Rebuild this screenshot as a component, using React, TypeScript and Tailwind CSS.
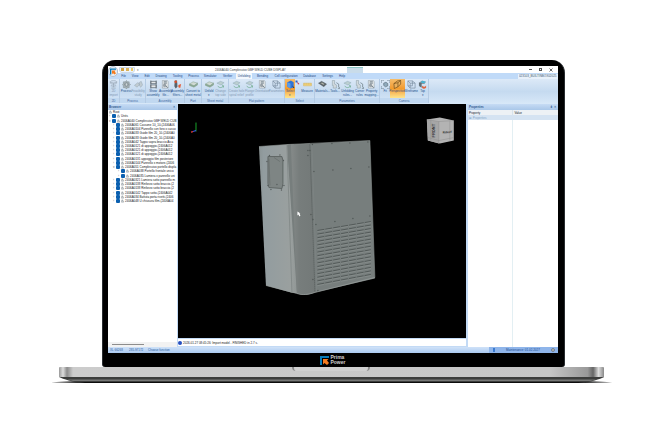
import React from "react";

type Kind = "sheet" | "gear" | "parts" | "stack" | "doc" | "filter" | "flat" | "flip" | "cube" | "ruler" | "dark" | "tool" | "fit" | "wire" | "top" | "persp";

const shapes: Record<Kind, React.ReactNode> = {
  sheet: (
    <g fill="none" stroke="#98a6b5" strokeWidth="1.6">
      <ellipse cx="10" cy="4" rx="7" ry="2.5" />
      <path d="M3 4v3c2 3 12 3 14 0V4M10 7v8M7 12l3 4 3-4M4 13h3M13 13h3M5 18h10" />
    </g>
  ),
  gear: (
    <g fill="#a6b0b4" stroke="#7c8a92">
      <path d="M10 1l2 3 4 0 0 4 3 2-3 3v4h-4l-2 3-3-3H3v-4l-2-3 2-2V4h4z" />
      <circle cx="10" cy="10" r="4" fill="#6f7c85" />
      <path d="M7 8l5-2 1 6-5 2z" fill="#d1d7da" />
    </g>
  ),
  parts: (
    <g fill="#c1ccd2" stroke="#91a4b0">
      <path d="M1 12l7-6 5 3-6 7zM11 6l5-3 3 8-4 5-3-3z" />
    </g>
  ),
  stack: (
    <g fill="#e4e7e9" stroke="#555f68" strokeWidth="1.5">
      <path d="M4 1v18M16 1v18M4 3h12v5H4zM4 11h12v6H4z" />
    </g>
  ),
  doc: (
    <g stroke="#7e8890">
      <path d="M3 1h11l2 3v14H3z" fill="#e7eaec" />
      <path d="M6 4h7M6 7h7M7 10l8 7" strokeWidth="2" stroke="#6b7a85" />
      <circle cx="8" cy="12" r="3" fill="#9aa3a9" />
    </g>
  ),
  filter: (
    <g>
      <path d="M4 1h5l1 14-4 4-3-5z" fill="#57626b" />
      <circle cx="6" cy="4" r="3" fill="#d6502c" />
      <path d="M12 11l6-2-2 9-4-2z" fill="#e55b35" />
    </g>
  ),
  flat: (
    <g stroke="#7d9b86">
      <path d="M1 9l8-5 10 3-8 6z" fill="#d0dad3" />
      <path d="M1 9v3l10 4 8-5V7l-8 6z" fill="#8fac97" />
    </g>
  ),
  flip: (
    <g stroke="#8ba8b3">
      <path d="M2 7l8-4 8 3-7 5z" fill="#bccfd1" />
      <path d="M4 13c2 5 10 5 12 0M13 11l4 2-1 4" fill="none" strokeWidth="2" stroke="#79b19a" />
    </g>
  ),
  cube: (
    <g>
      <path d="M3 5l8-4 6 4v11l-7 3-7-4z" fill="#2e74d7" />
      <path d="M3 5l7 3v11l-7-4z" fill="#5b9cea" />
      <path d="M14 12l5 5-3 1z" fill="#263755" />
    </g>
  ),
  ruler: <path d="M1 7h18v6H1zM4 7v3M8 7v3M12 7v3M16 7v3" fill="#efcf76" stroke="#d2b460" />,
  dark: (
    <g stroke="#5e666b">
      <path d="M1 7l7-4 11 6-6 6z" fill="#545d62" />
      <path d="M5 7l4-2 6 4-3 2z" fill="#b5b8ae" />
    </g>
  ),
  tool: (
    <g stroke="#7e8f99" fill="#d1d9dd">
      <path d="M3 1h5v8l4 2v7H5v-6H3z" />
      <path d="M12 6l5 3v7l3 2-5 2" fill="none" strokeWidth="2" />
    </g>
  ),
  fit: (
    <g fill="none" stroke="#5f7280" strokeWidth="1.5">
      <path d="M1 6V1h5M14 1h5v5M19 14v5h-5M6 19H1v-5" strokeDasharray="3 1" />
      <path d="M6 7l5-2 4 3v5l-5 2-4-3z" fill="#8faabc" />
    </g>
  ),
  wire: (
    <g fill="none" stroke="#73869a" strokeWidth="1.4">
      <path d="M2 2h10v11H2zM7 7h11v11H7zM2 2l5 5M12 2l6 5M2 13l5 5" />
    </g>
  ),
  top: (
    <g>
      <path d="M2 6l7-5 9 3-4 5H7v6l-5-2z" fill="#8a979e" />
      <path d="M2 6h6v11l-5-3z" fill="#5e6d76" />
      <path d="M9 2l8 2-3 3-8-2z" fill="#3bb8de" />
      <path d="M9 13c3 3 7 2 9-1v5c-3 3-7 3-9 0z" fill="#dc6642" />
    </g>
  ),
  persp: (
    <g fill="#ebb15e" stroke="#6e4c1b" strokeWidth="1.5">
      <path d="M2 8l9-2v9l-8 4zM11 6l6-5v8l-6 6M2 8l8-6 7-1" />
    </g>
  ),
};

function Icon({ kind }: { kind: Kind }) {
  return (
    <svg viewBox="0 0 20 20" className="h-[9px] w-[9px] shrink-0" aria-hidden="true">
      {shapes[kind]}
    </svg>
  );
}

type Tool = { kind: Kind; lines: string[]; width: string; state?: "on" | "off" };
type Group = { title: string; width: string; tools: Tool[] };

const groups: Group[] = [
  { title: "2D", width: "w-[12px]", tools: [{ kind: "sheet", lines: ["2D", "import"], width: "w-[12px]", state: "off" }] },
  {
    title: "Process",
    width: "w-[26px]",
    tools: [
      { kind: "gear", lines: ["Process"], width: "w-[11px]" },
      { kind: "parts", lines: ["Feasibility", "study"], width: "w-[13px]", state: "off" },
    ],
  },
  {
    title: "Assembly",
    width: "w-[39px]",
    tools: [
      { kind: "stack", lines: ["Show", "assembly"], width: "w-[13px]" },
      { kind: "doc", lines: ["Assembly", "file..."], width: "w-[12px]" },
      { kind: "filter", lines: ["Assembly", "filters..."], width: "w-[12px]" },
    ],
  },
  { title: "Part", width: "w-[17px]", tools: [{ kind: "flat", lines: ["Convert to", "sheet metal"], width: "w-[16px]" }] },
  {
    title: "Sheet metal",
    width: "w-[27px]",
    tools: [
      { kind: "flat", lines: ["Unfold", "▾"], width: "w-[11px]" },
      { kind: "flip", lines: ["Change", "top side"], width: "w-[12px]", state: "off" },
    ],
  },
  {
    title: "Flat pattern",
    width: "w-[56px]",
    tools: [
      { kind: "flip", lines: ["Create hole", "spiral relief"], width: "w-[15px]", state: "off" },
      { kind: "flip", lines: ["Flange", "profile"], width: "w-[11px]", state: "off" },
      { kind: "doc", lines: ["Orientation"], width: "w-[14px]", state: "off" },
      { kind: "wire", lines: ["Parameters"], width: "w-[15px]", state: "off" },
    ],
  },
  {
    title: "Select",
    width: "w-[30px]",
    tools: [
      { kind: "cube", lines: ["Select", "▾"], width: "w-[10px]", state: "on" },
      { kind: "ruler", lines: ["Measure"], width: "w-[14px]" },
    ],
  },
  {
    title: "Parameters",
    width: "w-[65px]",
    tools: [
      { kind: "dark", lines: ["Materials..."], width: "w-[13px]" },
      { kind: "tool", lines: ["Tools..."], width: "w-[12px]" },
      { kind: "flip", lines: ["Unfolding", "rules..."], width: "w-[13px]" },
      { kind: "tool", lines: ["Corner", "rules"], width: "w-[11px]" },
      { kind: "doc", lines: ["Property", "mapping..."], width: "w-[13px]" },
    ],
  },
  {
    title: "Camera",
    width: "w-[49px]",
    tools: [
      { kind: "fit", lines: ["Fit"], width: "w-[9px]" },
      { kind: "persp", lines: ["Perspective"], width: "w-[15px]", state: "on" },
      { kind: "wire", lines: ["Wireframe"], width: "w-[13px]" },
      { kind: "top", lines: ["Top", "▾"], width: "w-[10px]" },
    ],
  },
];

const tabs: [string, string][] = [
  ["File", "w-[11px]"],
  ["View", "w-[12px]"],
  ["Edit", "w-[12px]"],
  ["Drawing", "w-[16px]"],
  ["Tooling", "w-[17px]"],
  ["Process", "w-[15px]"],
  ["Simulator", "w-[18px]"],
  ["Verifier", "w-[17px]"],
  ["Unfolding", "w-[16px]"],
  ["Bending", "w-[21px]"],
  ["Cell configuration", "w-[26px]"],
  ["Database", "w-[21px]"],
  ["Settings", "w-[15px]"],
  ["Help", "w-[14px]"],
];

type Row = { text: string; pad: string; arrow?: string; box?: boolean };

const child = (text: string): Row => ({ text, pad: "pl-[5px]", arrow: "›", box: true });

const rows: Row[] = [
  { text: "Root", pad: "pl-px" },
  { text: "Units", pad: "pl-px", arrow: "›", box: true },
  { text: "2406A040 Complessivo GBF WELD CUB", pad: "pl-px", arrow: "▾", box: true },
  child("2406A061 Cassone 10_10-(2406A06"),
  child("2406A0104 Pannello con foro x casso"),
  child("2406A033 Guide film 20_10-(2406A0"),
  child("2406A033 Guide film 20_10-(2406A0"),
  child("2406A042 Tappo sopra braccio Aica"),
  child("2406A0121 di appoggio-(2406A012"),
  child("2406A0121 di appoggio-(2406A012"),
  child("2406A0121 di appoggio-(2406A012"),
  child("2406A0131 appoggio film posteriore"),
  child("2406A0144 Pannello x motore-(2406"),
  { text: "2406A051 Complessivo portello displa", pad: "pl-[5px]", arrow: "▾", box: true },
  { text: "2406A038 Portello frontale unico", pad: "pl-[10px]", arrow: "›", box: true },
  { text: "2406A035 Lamiera x pannello uni", pad: "pl-[10px]", arrow: "›", box: true },
  child("2406A0321 Lamiera sotto pannello m"),
  child("2406A0138 Rinforzo sotto braccio-(2"),
  child("2406A0138 Rinforzo sotto braccio-(2"),
  child("2406A0142 Tappo sotto-(2406A042"),
  child("2406A034 Battuta porta rivetti-(2406"),
  child("2406A048 U chiusura film-(2406A04"),
];

function TreeRow({ row }: { row: Row }) {
  return (
    <li className={`flex min-h-0 flex-1 items-center gap-px ${row.pad}`}>
      {row.arrow && <span className="w-[2px] text-[#66717d]">{row.arrow}</span>}
      {row.box && (
        <input
          type="checkbox"
          defaultChecked
          aria-label={row.text}
          className="h-[4px] w-[4px] shrink-0 appearance-none rounded-[1px] bg-[#0b60b0]"
        />
      )}
      <svg viewBox="0 0 8 8" className="h-[4px] w-[3px] shrink-0" aria-hidden="true">
        <path d="M2 1h3v3l2 1v2H1V5l1-1z" fill="#d4d9dc" stroke="#69747c" />
      </svg>
      <span className="whitespace-nowrap">{row.text}</span>
    </li>
  );
}

function TitleBar() {
  return (
    <header className="flex h-[7px] shrink-0 items-center bg-white pl-[11px] pr-[5px]">
      <div className="flex h-[6px] w-[16px] items-center justify-around rounded-b-[3px] border border-[#cbd9e9] bg-[#eef4fb]">
        <i className="h-[3px] w-[3px] bg-[#d2a245]" />
        <i className="h-[3px] w-[3px] bg-[#d9b15b]" />
        <i className="h-[3px] w-[2px] bg-[#eac969]" />
      </div>
      <span className="ml-[2px] text-[#5b6673]">▾</span>
      <h1 className="ml-[76px] w-[132px] whitespace-nowrap text-[#3a3f45]">2406A040 Complessivo GBF WELD CUBE DISPLAY</h1>
      <i className="mt-px h-[6px] w-[16px] border-t border-[#8cc5c4] bg-[#c9dcea]" />
      <div className="ml-auto flex items-center gap-[7px]">
        <button aria-label="Minimize" className="h-px w-[3px] bg-[#555]" />
        <button aria-label="Restore" className="h-[3px] w-[3px] border border-[#555]" />
        <button aria-label="Close" className="flex w-[4px]">
          <svg viewBox="0 0 8 8" className="h-[4px] w-[4px]">
            <path d="M1 1l6 6M7 1L1 7" stroke="#444" strokeWidth="1.6" />
          </svg>
        </button>
      </div>
    </header>
  );
}

function Ribbon() {
  return (
    <section className="flex h-[25px] shrink-0 bg-linear-to-b from-[#dce9f7] via-[#c5daf0] to-[#d8e8f8]">
      {groups.map((g) => (
        <div key={g.title} className={`flex h-[24px] shrink-0 flex-col border-r border-[#b4cbe4] ${g.width}`}>
          <div className="flex h-[19px] justify-center">
            {g.tools.map((t, i) => (
              <button
                key={i}
                className={`flex shrink-0 flex-col items-center whitespace-nowrap pt-px ${t.width} ${
                  t.state === "on"
                    ? "bg-linear-to-b from-[#f6bd69] via-[#f29b2e] to-[#fde58c] text-[#3b4b7c]"
                    : t.state === "off"
                      ? "text-[#8398b3]"
                      : "text-[#24508c]"
                }`}
              >
                <Icon kind={t.kind} />
                {t.lines.map((l) => (
                  <span key={l} className="leading-[4px]">
                    {l}
                  </span>
                ))}
              </button>
            )).flatMap((button, i) =>
              g.title === "Select" && i === 0
                ? [
                    button,
                    <svg key="pick" viewBox="0 0 10 10" className="mt-px h-[5px] w-[5px]" aria-hidden="true">
                      <path d="M1 1h4v4H1z" fill="#2d62c4" />
                      <path d="M4 3l5 5-3 1z" fill="#c23b4b" />
                    </svg>,
                  ]
                : [button],
            )}
          </div>
          <div className="flex h-[5px] items-center justify-center whitespace-nowrap bg-[#c1d8f0] text-[#3f69a0]">{g.title}</div>
        </div>
      ))}
    </section>
  );
}

const louvres = Array.from({ length: 16 }, (_, i) => i);
const bolts = [
  [312.5, 145], [332, 144], [350, 143.5], [368, 142.5], [314, 172], [333, 170.5], [351, 169], [369, 167.5],
  [316, 225], [335, 222], [353, 219], [370, 216.5], [308, 151], [310, 151], [308, 156], [311, 215], [313, 220], [313, 280], [318, 291],
];
const plateBolts = [[269.5, 156], [280, 155.5], [267, 162], [283.5, 161], [268, 186], [284, 186], [271, 190], [281.5, 190.5], [277, 185]];

function Viewport() {
  return (
    <div className="relative min-h-0 flex-1 bg-black">
      <svg viewBox="178 105 288 233" className="block h-full w-full" role="img" aria-label="3D model of the cabinet">
        <defs>
          <linearGradient id="side" x1="0" x2="1">
            <stop offset="0" stopColor="#8b9495" />
            <stop offset=".12" stopColor="#929c9f" />
            <stop offset=".8" stopColor="#9aa09f" />
            <stop offset="1" stopColor="#8f9594" />
          </linearGradient>
          <linearGradient id="curve" x1="0" x2="1">
            <stop offset="0" stopColor="#858a89" />
            <stop offset=".35" stopColor="#777d7c" />
            <stop offset="1" stopColor="#737978" />
          </linearGradient>
        </defs>
        <path d="M259 147l28-2 7 0 4 149-7-1-25-7z" fill="url(#side)" />
        <path d="M287 145l7 0 76-4 5 138-60 14c-6 3-13 3-18 1z" fill="#777e7d" />
        <path d="M291 145l19-1 5 149c-6 2-12 3-18 1z" fill="url(#curve)" />
        <path d="M259 147l28-2 83-4 5 137" fill="none" stroke="#8d9392" strokeWidth=".6" />
        <path d="M266 286l31 8c5 2 12 1 18-1l60-15" fill="none" stroke="#9ba09f" strokeWidth=".7" />
        <path d="M287 145l5 148" stroke="#858c8b" strokeWidth="1" />
        <path d="M310 145l5 147" stroke="#515756" strokeWidth="1" strokeDasharray="1 1" />
        <path d="M312 145l5 147" stroke="#868c8b" strokeWidth=".4" />
        <path d="M268 157l14 0 1 4 0 23-1 5-13-1-1-4z" fill="#7e8584" stroke="#555c5b" strokeWidth=".8" />
        <path d="M274 158l6 4M269 159l1 27" stroke="#626867" strokeWidth=".6" />
        {plateBolts.map(([x, y]) => (
          <circle key={`${x}-${y}`} cx={x} cy={y} r=".7" fill="#545a5a" />
        ))}
        {bolts.map(([x, y]) => (
          <circle key={`${x}-${y}`} cx={x} cy={y} r=".7" fill="#505655" />
        ))}
        {louvres.map((i) => (
          <g key={i} fill="none">
            <path d={`M317.5 ${231 + i * 3.6}L371 ${222 + i * 3.53}`} stroke="#4f5655" strokeWidth=".9" strokeDasharray="7 1" />
            <path d={`M317.5 ${232.2 + i * 3.6}L371 ${223.2 + i * 3.53}`} stroke="#919796" strokeWidth=".5" strokeDasharray="7 1" />
          </g>
        ))}
        <path d="M297.5 212l0 4 1-1 1 2 1-1-1-2h1z" fill="#fff" />
        <path d="M196 123v9" stroke="#18a52b" />
        <path d="M196 131l-3 1" stroke="#3857e8" strokeWidth="1.2" />
        <path d="M193 132l-2 .5" stroke="#e13b3b" strokeWidth="1.2" />
        <path d="M427 120l13-2 14 3v20l-14 3-12-3z" fill="#b3b3b3" />
        <path d="M427 120l12 2v22l-11-3z" fill="#a6a6a6" />
        <path d="M427 120l12 2 15-1M439 122v22M431 120v21M428 138l11 3 15-3M450 121v20" fill="none" stroke="#8d8d8d" strokeWidth=".5" />
        <text x="443" y="134" fontSize="3" fontWeight="700" fill="#303030" transform="rotate(-4 443 134)">
          RIGHT
        </text>
        <text x="435" y="138" fontSize="4" fontWeight="700" fill="#303030" transform="rotate(-90 435 138)">
          FRONT
        </text>
      </svg>
    </div>
  );
}

function PanelHead({ title, pin }: { title: string; pin?: boolean }) {
  return (
    <h2 className="flex h-[6px] shrink-0 items-center justify-between bg-linear-to-b from-[#c6dbf4] to-[#a9c7e9] px-px font-bold text-[#31598e]">
      {title}
      <span className="flex gap-[2px] pr-px">
        {pin && <span>ǂ</span>}
        <span>×</span>
      </span>
    </h2>
  );
}

function Screen() {
  return (
    <main className="relative flex min-h-0 flex-1 flex-col overflow-hidden bg-[#c3daf5] text-[3px] leading-[4px]">
      <TitleBar />
      <nav className="flex h-[6px] shrink-0 items-center bg-[#c0daf8] pl-[10px] text-[#1e4680]">
        {tabs.map(([name, width]) => (
          <button
            key={name}
            className={`flex h-full shrink-0 items-center justify-center whitespace-nowrap ${width} ${
              name === "Unfolding" ? "rounded-t-[1px] bg-[#f3f8fd]" : ""
            }`}
          >
            {name}
          </button>
        ))}
        <select
          aria-label="Machine"
          className="ml-auto h-[5px] w-[40px] appearance-none bg-[#e8f1fb] pl-px leading-[5px] text-[#42576f]"
        >
          <option>023103_BUILTINBOX02025</option>
        </select>
      </nav>
      <Ribbon />
      <div className="flex min-h-0 flex-1">
        <aside className="flex w-[69px] shrink-0 flex-col overflow-hidden bg-white">
          <PanelHead title="Browser" />
          <ul className="flex h-[93px] shrink-0 flex-col text-[#15181b]">
            {rows.map((row, i) => (
              <TreeRow key={i} row={row} />
            ))}
          </ul>
          <div className="mt-auto flex h-[5px] items-center bg-[#f2f2f2] pl-[4px]">
            <i className="h-px w-[32px] bg-[#8d8d8d]" />
          </div>
        </aside>
        <section className="ml-px flex min-w-0 flex-1 flex-col">
          <Viewport />
          <output className="mt-px mb-px flex h-[7px] shrink-0 items-center gap-px whitespace-nowrap bg-white text-[#16191c]">
            <i className="h-[4px] w-[4px] rounded-full bg-[#254fc0]" />
            2026.01.27 08:45:26: Import model - FINISHED in 2.7 s.
          </output>
        </section>
        <aside className="ml-[2px] flex w-[90px] shrink-0 flex-col bg-white">
          <PanelHead title="Properties" pin />
          <table className="h-full w-full table-fixed border-collapse text-left text-[#16212d]">
            <thead>
              <tr className="h-[5px] bg-[#edf1f5]">
                <th className="px-px py-0 font-normal">Property</th>
                <th className="border-l border-[#d8e3ec] px-px py-0 font-normal">Value</th>
              </tr>
            </thead>
            <tbody>
              <tr className="h-[5px] bg-[#d5e3f2] text-[#83a5c8]">
                <td colSpan={2} className="px-px py-0">
                  ⊞ Properties
                </td>
              </tr>
              <tr>
                <td />
                <td className="border-l border-[#e3eff3]" />
              </tr>
            </tbody>
          </table>
        </aside>
      </div>
      <footer className="flex h-[6px] shrink-0 items-center whitespace-nowrap bg-linear-to-b from-[#d0e2f8] to-[#abcaf1] pl-[2px] text-[#2a5c9e]">
        <span className="w-[19px]">XL 66268</span>
        <span className="w-[19px]">285.97172</span>
        <span>Choose function</span>
        <span className="ml-auto flex h-full w-[69px] items-center justify-between bg-[#8fb5ea] pl-[4px] pr-[3px] text-[#1b4a90]">
          <i className="h-[4px] w-[2px] bg-[#3a7ad0]" />
          <span>Maintenance: 01.02.2027</span>
          <i className="h-[4px] w-[4px] rounded-full border border-[#737f91] bg-[#b9b9ae]" />
        </span>
      </footer>
      <button aria-label="Application menu" className="absolute top-0 left-0 h-[11px] w-[10px] rounded-full border border-[#b0bfd0] bg-[#e9eef4] p-px">
        <PrimaMark />
      </button>
    </main>
  );
}

function PrimaMark() {
  return (
    <svg viewBox="0 0 18 18" className="h-full w-full" aria-hidden="true">
      <path d="M0 0h18v4H4v14H0z" fill="#087bb8" />
      <path d="M6 6h11l-3 3 4 5-4 4-5-4-3 3z" fill="#f47b20" />
    </svg>
  );
}

export default function App() {
  return (
    <div className="flex min-h-screen flex-col items-center overflow-hidden bg-white pt-[60px] font-['Liberation_Sans_Narrow','Liberation_Sans',sans-serif]">
      <div className="ml-[2px] flex h-[307px] w-[69.6%] flex-col rounded-t-[13px] rounded-b-[3px] border-x border-[#292d30] bg-black pt-[6px] pr-[6px] pl-[5px]">
        <Screen />
        <div className="flex h-[14px] shrink-0 items-center justify-center gap-px text-[5px] leading-[5px] font-bold text-[#d1d1d1]">
          <span className="h-[9px] w-[9px]">
            <PrimaMark />
          </span>
          <span>
            Prima
            <br />
            Power
          </span>
        </div>
      </div>
      <div className="mr-[2px] flex w-[82%] flex-col items-center">
        <div className="flex h-[10px] w-full justify-center rounded-t-[1px] bg-[linear-gradient(90deg,#999_0,#ddd_4px,#8c8c8c_8px,#ccc_14px,#c6c6c6_90%,#999_97%,#666_98%,#ddd_99%,#888_100%)]">
          <i className="h-[4px] w-[78px] rounded-b-[4px] border-x-2 border-[#8b8b8b] bg-[#d0d0d0]" />
        </div>
        <svg viewBox="0 0 547 6" preserveAspectRatio="none" className="h-[6px] w-full overflow-visible" aria-hidden="true">
          <path d="M-8 5.2L20 4h507l28 1.2-28 .8H20z" fill="#222" />
          <path d="M0 0h547c-4 2-14 5-24 6H24C14 5 4 2 0 0z" fill="#3c3d3c" />
          <path d="M8 2.5h531l-6 1.500H14z" fill="#777877" />
          <path d="M20 5h507l-6 1H26z" fill="#0c0c0c" />
        </svg>
      </div>
    </div>
  );
}
